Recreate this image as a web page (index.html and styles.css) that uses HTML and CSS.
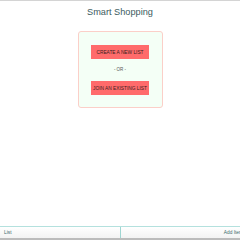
FILE: index.html
```html
<!DOCTYPE html>
<html lang="en">
<head>
    <meta charset="UTF-8">
    <meta name="viewport" content="width=device-width, initial-scale=1.0">
    <title>Smart Shopping</title>
    <link rel="stylesheet" href="styles.css">
</head>
<body>
    <div class="app">
        <header class="header">
            <h1>Smart Shopping</h1>
        </header>
        <main class="main">
            <div class="welcome-box">
                <button type="button" class="btn">CREATE A NEW LIST</button>
                <p class="divider">- OR -</p>
                <button type="button" class="btn">JOIN AN EXISTING LIST</button>
            </div>
        </main>
        <nav class="nav">
            <a class="nav-link" href="#">List</a>
            <a class="nav-link nav-link-right" href="#"><span class="nav-label">Add Item</span></a>
        </nav>
    </div>
</body>
</html>
```

FILE: styles.css
```css
* {
    margin: 0;
    padding: 0;
    box-sizing: border-box;
}
html, body {
    height: 100%;
}
body {
    font-family: "Liberation Sans", Arial, sans-serif;
    color: #2f4f4f;
    background: white;
}
.app {
    height: 100%;
    display: flex;
    flex-direction: column;
    border-top: 1px solid #d4d4d4;
    border-bottom: 2px solid #bcbcbc;
}
.header {
    text-align: center;
    padding-top: 6px;
}
h1 {
    font-size: 9.2px;
    font-weight: normal;
    color: #3b5b5e;
    line-height: 11px;
}
.main {
    flex: 1;
    display: flex;
    justify-content: center;
    align-items: flex-start;
    padding-top: 13px;
}
.welcome-box {
    width: 85px;
    height: 77px;
    display: flex;
    flex-direction: column;
    align-items: center;
    padding-top: 13px;
    background: #f4fff6;
    border: 1px solid #fbcfc8;
    border-radius: 3px;
}
.btn {
    width: 58px;
    height: 14px;
    border: none;
    background: #ff6b6b;
    color: #3a1f1f;
    font-family: inherit;
    font-size: 4.8px;
    cursor: pointer;
}
.divider {
    font-size: 4.5px;
    color: #555;
    line-height: 6px;
    margin: 8px 0 8px;
}
.nav {
    display: grid;
    grid-template-columns: minmax(0, 1fr) minmax(0, 1fr);
    height: 12px;
    overflow: hidden;
    border-top: 1px solid #b4e1de;
    background: linear-gradient(#ffffff, #f3f3f3);
}
.nav-link {
    font-size: 4.8px;
    line-height: 11px;
    color: #3b6b6b;
    text-decoration: none;
    padding: 0 4px;
}
.nav-link-right {
    display: flex;
    justify-content: flex-end;
    border-left: 1px solid #9fd6d2;
    padding-right: 0;
    overflow: hidden;
    white-space: nowrap;
}
.nav-label {
    margin-right: -3px;
}
```
